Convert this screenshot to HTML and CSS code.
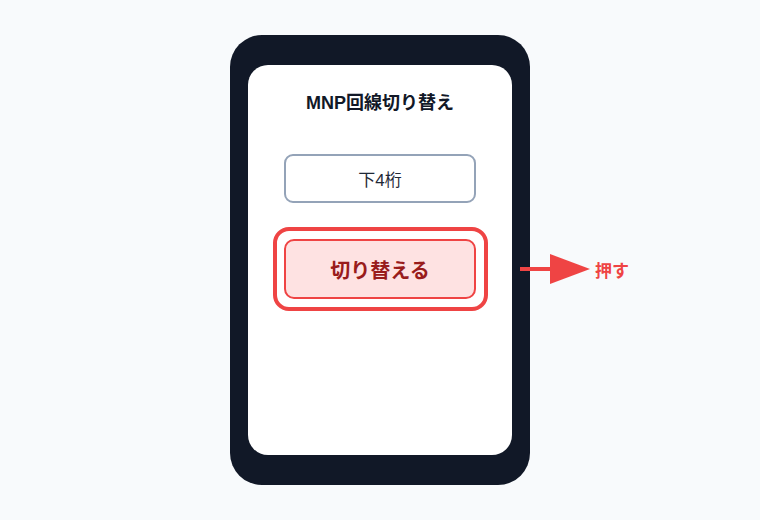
FILE: index.html
```html
<!DOCTYPE html>
<html lang="ja">
<head>
    <meta charset="UTF-8">
    <meta name="viewport" content="width=device-width, initial-scale=1.0">
    <title>MNP回線切り替え</title>
    <link rel="stylesheet" href="styles.css">
</head>
<body>
    <div class="phone">
        <div class="screen">
            <h1 class="title">MNP回線切り替え</h1>

            <div class="field">下4桁</div>

            <div class="action">
                <button class="btn-switch">切り替える</button>
                <div class="callout">
                    <svg width="70" height="30" viewBox="0 0 70 30">
                        <rect x="0" y="13" width="32" height="4" fill="#ef4444"></rect>
                        <polygon points="30,0 70,15 30,30" fill="#ef4444"></polygon>
                    </svg>
                    <span>押す</span>
                </div>
            </div>
        </div>
    </div>
</body>
</html>
```

FILE: styles.css
```css
* {
    margin: 0;
    padding: 0;
    box-sizing: border-box;
    font-family: 'Liberation Sans', 'Noto Sans CJK JP', sans-serif;
}

body {
    background: #f8fafc;
    height: 100vh;
    display: flex;
    align-items: center;
    justify-content: center;
}

.phone {
    width: 300px;
    height: 450px;
    background: #111827;
    border-radius: 32px;
    padding: 30px 18px;
}

.screen {
    height: 100%;
    background: white;
    border-radius: 20px;
    padding-top: 25px;
    display: flex;
    flex-direction: column;
    align-items: center;
}

.title {
    font-size: 18px;
    font-weight: 700;
    line-height: 27px;
    color: #111827;
}

.field {
    margin-top: 37px;
    width: 192px;
    height: 49px;
    border: 2px solid #94a3b8;
    border-radius: 9px;
    display: flex;
    align-items: center;
    justify-content: center;
    font-size: 17px;
    color: #1f2937;
}

.action {
    position: relative;
    margin-top: 36px;
}

/* highlight ring around the button */
.action::before {
    content: '';
    position: absolute;
    inset: -12px -12px -12px -11px;
    border: 4px solid #ef4444;
    border-radius: 16px;
}

.btn-switch {
    display: block;
    width: 192px;
    height: 60px;
    background: #fee2e2;
    border: 2px solid #ef4444;
    border-radius: 10px;
    color: #991b1b;
    font-size: 20px;
    font-weight: 700;
}

.callout {
    position: absolute;
    left: calc(100% + 44px);
    top: 50%;
    transform: translateY(-50%);
    display: flex;
    align-items: center;
    gap: 5px;
    color: #ef4444;
    font-size: 17px;
    font-weight: 700;
    white-space: nowrap;
}

.callout svg {
    display: block;
}
```
